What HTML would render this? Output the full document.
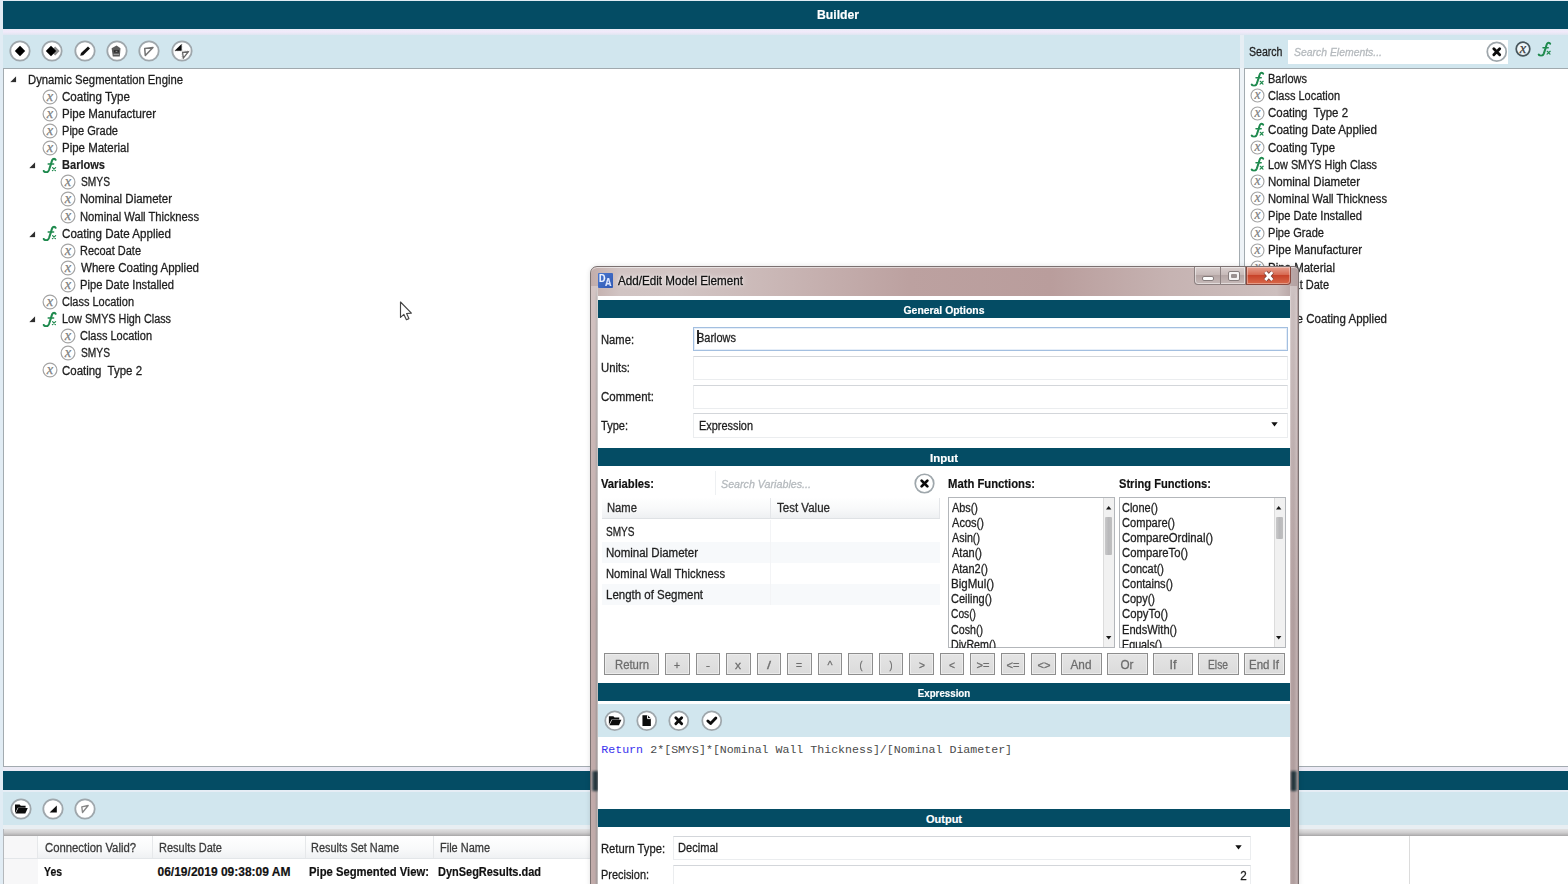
<!DOCTYPE html>
<html><head><meta charset="utf-8"><title>Builder</title>
<style>
html,body{margin:0;padding:0}
body{width:1568px;height:884px;overflow:hidden;background:#e1ecf4;position:relative;font-family:"Liberation Sans",sans-serif;font-size:12px}
#main,#dlg{position:absolute;left:0;top:0;width:1568px;height:884px;overflow:hidden}
#main div,#dlg div{position:absolute;box-sizing:border-box}
.t{position:absolute;white-space:nowrap;line-height:16px;display:block}
svg{position:absolute;overflow:visible}

</style></head>
<body>
<svg width="0" height="0" style="position:absolute">
<defs>
<symbol id="vx" viewBox="0 0 16 16"><circle cx="8" cy="8" r="6.9" fill="#fff" stroke="#a4a4a4" stroke-width="1.2"/><text x="7.9" y="11.7" text-anchor="middle" font-family="Liberation Serif" font-style="italic" font-size="14.5" fill="#808080" stroke="#808080" stroke-width="0.25">x</text></symbol>
<symbol id="vxd" viewBox="0 0 16 16"><circle cx="8" cy="8" r="6.8" fill="#eef5f8" stroke="#46555b" stroke-width="1.7"/><text x="7.9" y="11.7" text-anchor="middle" font-family="Liberation Serif" font-style="italic" font-size="14.5" fill="#3a3a3a" stroke="#3a3a3a" stroke-width="0.25">x</text></symbol>
<symbol id="fx" viewBox="0 0 16 16"><g fill="none" stroke="#1f8a4e" stroke-linecap="round" stroke-linejoin="round"><path d="M13.6 2.8 C13.1 1.4 11.1 1.2 10.3 3 C9.7 4.3 9.3 5.9 8.8 7.6 L7 13 C6.3 14.9 4.8 15.7 3 15 C2.4 14.8 2 14.4 1.8 14" stroke-width="2.05"/><path d="M6.2 6.9 H11.6" stroke-width="1.5"/><path d="M10.6 10.6 L13.4 13.6 M13.6 10.6 L10.4 13.6" stroke-width="1.25"/></g></symbol>
<symbol id="exp" viewBox="0 0 6 6"><path d="M5.6 0.2 V5.6 H0.2 Z" fill="#2e2e2e"/></symbol>
<symbol id="cb" viewBox="0 0 22 22"><circle cx="11" cy="11" r="9.7" fill="#fff" stroke="#9fa7ac" stroke-width="1.8"/></symbol>
<symbol id="i-dia" viewBox="0 0 22 22"><path d="M11 5.8 L16.2 11 L11 16.2 L5.8 11 Z" fill="#000"/></symbol>
<symbol id="i-dia2" viewBox="0 0 22 22"><path d="M14.2 6.6 L18.6 11 L14.2 15.4 L9.8 11 Z" fill="#8c8c8c"/><path d="M10 5.8 L15.2 11 L10 16.2 L4.8 11 Z" fill="#000"/></symbol>
<symbol id="i-pen" viewBox="0 0 22 22"><path d="M6.2 15.8 L7 13 L14 6.4 L16 8.4 L9.2 15.2 Z" fill="#111"/></symbol>
<symbol id="i-trash" viewBox="0 0 22 22"><path d="M10.6 5.4 L14.5 8.3 L13.8 16.5 H6.8 L5.6 8.3 Z" fill="#5c5c5c"/><path d="M7.8 10.2 H13 V12.6 H7.8 Z" fill="#2a2a2a"/><path d="M7.6 14.4 H13.2" stroke="#b0b0b0" stroke-width="0.9"/><path d="M9.6 11.4 H11.4" stroke="#aaa" stroke-width="0.8"/></symbol>
<symbol id="i-tri" viewBox="0 0 22 22"><path d="M6.7 8.4 L15 7.4 L7.3 15.5 Z" fill="none" stroke="#727272" stroke-width="1.5" stroke-linejoin="round"/></symbol>
<symbol id="i-quad" viewBox="0 0 22 22"><path d="M11 1.5 V20.5 M1.5 11 H20.5" stroke="#c2c2c2" stroke-width="0.8" stroke-dasharray="1.2 1.2"/><path d="M3.6 10.8 L10.6 4 V10.8 Z" fill="#0a0a0a"/><path d="M11.6 12.5 L17.5 11.7 L12.3 18.2 Z" fill="none" stroke="#666" stroke-width="1.3" stroke-linejoin="round"/></symbol>
<symbol id="i-x" viewBox="0 0 22 22"><path d="M8 8 L14 14 M14 8 L8 14" stroke="#0c0c0c" stroke-width="2.9" stroke-linecap="round"/></symbol>
<symbol id="i-check" viewBox="0 0 22 22"><path d="M7 11.2 L9.8 13.8 L15.2 8.2" fill="none" stroke="#0c0c0c" stroke-width="2.9" stroke-linecap="round" stroke-linejoin="round"/></symbol>
<symbol id="i-folder" viewBox="0 0 22 22"><path d="M5 6.4 H9.6 L10.8 7.8 H15.6 V9.7 H7.8 L5 15.2 Z" fill="#0c0c0c"/><path d="M8.3 10.1 H17.8 L15.3 15.6 H5.5 Z" fill="#0c0c0c"/></symbol>
<symbol id="i-doc" viewBox="0 0 22 22"><path d="M6.6 5.4 H12 L15.2 8.6 V16.4 H6.6 Z" fill="#0c0c0c"/><path d="M11.8 5.4 V8.8 H15.2" fill="none" stroke="#fff" stroke-width="1"/></symbol>
<symbol id="i-up" viewBox="0 0 22 22"><path d="M14.8 7.4 V14.6 H7.6 Z" fill="#0c0c0c"/></symbol>
<symbol id="i-flag" viewBox="0 0 22 22"><path d="M7.8 8.8 L14.2 7.5 L8.5 14.5 Z" fill="none" stroke="#858585" stroke-width="1.3" stroke-linejoin="round"/></symbol>
</defs>
</svg>

<div id="main">
<div style="left:3px;top:1px;width:1565px;height:28px;background:#044c64"></div>
<span class="t" style="left:538px;width:600px;text-align:center;top:6.70px;font-size:12px;font-weight:700;color:#fff;font-family:'Liberation Sans',sans-serif;transform:scaleX(1.0159);transform-origin:center center;transform-origin:center;-webkit-text-stroke:0.18px #fff;">Builder</span>
<div style="left:3px;top:29px;width:1565px;height:6px;background:linear-gradient(#e8edf6,#f2eafa 45%,#dfe6f1)"></div>
<div style="left:3px;top:35px;width:1237px;height:33px;background:#d1e6ee"></div>
<div style="left:1240px;top:35px;width:4px;height:33px;background:#e6eef4"></div>
<div style="left:1244px;top:35px;width:324px;height:33px;background:#d1e6ee"></div>
<div style="left:3px;top:67.6px;width:1237px;height:699.4px;background:#fff;border:1px solid #a3abb0;border-top:1.6px solid #a0a9ae"></div>
<div style="left:1244.2px;top:67.6px;width:330px;height:699.4px;background:#fff;border:1px solid #a3abb0;border-top:1.6px solid #a0a9ae"></div>
<div style="left:1240px;top:68px;width:4.2px;height:699px;background:#eef3f7"></div>
<svg style="left:8.70px;top:40.20px" width="22" height="22"><use href="#cb"/></svg>
<svg style="left:8.70px;top:40.20px" width="22" height="22"><use href="#i-dia"/></svg>
<svg style="left:41.00px;top:40.20px" width="22" height="22"><use href="#cb"/></svg>
<svg style="left:41.00px;top:40.20px" width="22" height="22"><use href="#i-dia2"/></svg>
<svg style="left:73.60px;top:40.20px" width="22" height="22"><use href="#cb"/></svg>
<svg style="left:73.60px;top:40.20px" width="22" height="22"><use href="#i-pen"/></svg>
<svg style="left:106.20px;top:40.20px" width="22" height="22"><use href="#cb"/></svg>
<svg style="left:106.20px;top:40.20px" width="22" height="22"><use href="#i-trash"/></svg>
<svg style="left:138.30px;top:40.20px" width="22" height="22"><use href="#cb"/></svg>
<svg style="left:138.30px;top:40.20px" width="22" height="22"><use href="#i-tri"/></svg>
<svg style="left:170.60px;top:40.20px" width="22" height="22"><use href="#cb"/></svg>
<svg style="left:170.60px;top:40.20px" width="22" height="22"><use href="#i-quad"/></svg>
<svg style="left:9.80px;top:76.40px" width="6.6" height="6.6"><use href="#exp"/></svg>
<span class="t" style="left:27.67px;top:71.70px;font-size:12px;font-weight:400;color:#1e1e1e;font-family:'Liberation Sans',sans-serif;transform:scaleX(0.9407);transform-origin:left center;-webkit-text-stroke:0.28px #1e1e1e;">Dynamic Segmentation Engine</span>
<svg style="left:41.80px;top:88.61px" width="16" height="16"><use href="#vx"/></svg>
<span class="t" style="left:62.01px;top:88.81px;font-size:12px;font-weight:400;color:#1e1e1e;font-family:'Liberation Sans',sans-serif;transform:scaleX(0.9645);transform-origin:left center;-webkit-text-stroke:0.28px #1e1e1e;">Coating Type</span>
<svg style="left:41.80px;top:105.72px" width="16" height="16"><use href="#vx"/></svg>
<span class="t" style="left:61.66px;top:105.92px;font-size:12px;font-weight:400;color:#1e1e1e;font-family:'Liberation Sans',sans-serif;transform:scaleX(0.9586);transform-origin:left center;-webkit-text-stroke:0.28px #1e1e1e;">Pipe Manufacturer</span>
<svg style="left:41.80px;top:122.83px" width="16" height="16"><use href="#vx"/></svg>
<span class="t" style="left:61.69px;top:123.03px;font-size:12px;font-weight:400;color:#1e1e1e;font-family:'Liberation Sans',sans-serif;transform:scaleX(0.9225);transform-origin:left center;-webkit-text-stroke:0.28px #1e1e1e;">Pipe Grade</span>
<svg style="left:41.80px;top:139.94px" width="16" height="16"><use href="#vx"/></svg>
<span class="t" style="left:61.66px;top:140.14px;font-size:12px;font-weight:400;color:#1e1e1e;font-family:'Liberation Sans',sans-serif;transform:scaleX(0.9567);transform-origin:left center;-webkit-text-stroke:0.28px #1e1e1e;">Pipe Material</span>
<svg style="left:28.60px;top:162.25px" width="6.6" height="6.6"><use href="#exp"/></svg>
<svg style="left:42.40px;top:156.65px" width="16" height="16"><use href="#fx"/></svg>
<span class="t" style="left:61.86px;top:157.25px;font-size:12px;font-weight:700;color:#1e1e1e;font-family:'Liberation Sans',sans-serif;transform:scaleX(0.9210);transform-origin:left center;-webkit-text-stroke:0.18px #1e1e1e;">Barlows</span>
<svg style="left:60.10px;top:174.16px" width="16" height="16"><use href="#vx"/></svg>
<span class="t" style="left:80.54px;top:174.36px;font-size:12px;font-weight:400;color:#1e1e1e;font-family:'Liberation Sans',sans-serif;transform:scaleX(0.8525);transform-origin:left center;-webkit-text-stroke:0.28px #1e1e1e;">SMYS</span>
<svg style="left:60.10px;top:191.27px" width="16" height="16"><use href="#vx"/></svg>
<span class="t" style="left:80.06px;top:191.47px;font-size:12px;font-weight:400;color:#1e1e1e;font-family:'Liberation Sans',sans-serif;transform:scaleX(0.9580);transform-origin:left center;-webkit-text-stroke:0.28px #1e1e1e;">Nominal Diameter</span>
<svg style="left:60.10px;top:208.38px" width="16" height="16"><use href="#vx"/></svg>
<span class="t" style="left:80.08px;top:208.58px;font-size:12px;font-weight:400;color:#1e1e1e;font-family:'Liberation Sans',sans-serif;transform:scaleX(0.9342);transform-origin:left center;-webkit-text-stroke:0.28px #1e1e1e;">Nominal Wall Thickness</span>
<svg style="left:28.60px;top:230.69px" width="6.6" height="6.6"><use href="#exp"/></svg>
<svg style="left:42.40px;top:225.09px" width="16" height="16"><use href="#fx"/></svg>
<span class="t" style="left:62.01px;top:225.69px;font-size:12px;font-weight:400;color:#1e1e1e;font-family:'Liberation Sans',sans-serif;transform:scaleX(0.9667);transform-origin:left center;-webkit-text-stroke:0.28px #1e1e1e;">Coating Date Applied</span>
<svg style="left:60.10px;top:242.60px" width="16" height="16"><use href="#vx"/></svg>
<span class="t" style="left:80.1px;top:242.80px;font-size:12px;font-weight:400;color:#1e1e1e;font-family:'Liberation Sans',sans-serif;transform:scaleX(0.9145);transform-origin:left center;-webkit-text-stroke:0.28px #1e1e1e;">Recoat Date</span>
<svg style="left:60.10px;top:259.71px" width="16" height="16"><use href="#vx"/></svg>
<span class="t" style="left:80.95px;top:259.91px;font-size:12px;font-weight:400;color:#1e1e1e;font-family:'Liberation Sans',sans-serif;transform:scaleX(0.9613);transform-origin:left center;-webkit-text-stroke:0.28px #1e1e1e;">Where Coating Applied</span>
<svg style="left:60.10px;top:276.82px" width="16" height="16"><use href="#vx"/></svg>
<span class="t" style="left:80.08px;top:277.02px;font-size:12px;font-weight:400;color:#1e1e1e;font-family:'Liberation Sans',sans-serif;transform:scaleX(0.9331);transform-origin:left center;-webkit-text-stroke:0.28px #1e1e1e;">Pipe Date Installed</span>
<svg style="left:41.80px;top:293.93px" width="16" height="16"><use href="#vx"/></svg>
<span class="t" style="left:62.04px;top:294.13px;font-size:12px;font-weight:400;color:#1e1e1e;font-family:'Liberation Sans',sans-serif;transform:scaleX(0.9146);transform-origin:left center;-webkit-text-stroke:0.28px #1e1e1e;">Class Location</span>
<svg style="left:28.60px;top:316.24px" width="6.6" height="6.6"><use href="#exp"/></svg>
<svg style="left:42.40px;top:310.64px" width="16" height="16"><use href="#fx"/></svg>
<span class="t" style="left:61.71px;top:311.24px;font-size:12px;font-weight:400;color:#1e1e1e;font-family:'Liberation Sans',sans-serif;transform:scaleX(0.9029);transform-origin:left center;-webkit-text-stroke:0.28px #1e1e1e;">Low SMYS High Class</span>
<svg style="left:60.10px;top:328.15px" width="16" height="16"><use href="#vx"/></svg>
<span class="t" style="left:80.44px;top:328.35px;font-size:12px;font-weight:400;color:#1e1e1e;font-family:'Liberation Sans',sans-serif;transform:scaleX(0.9146);transform-origin:left center;-webkit-text-stroke:0.28px #1e1e1e;">Class Location</span>
<svg style="left:60.10px;top:345.26px" width="16" height="16"><use href="#vx"/></svg>
<span class="t" style="left:80.54px;top:345.46px;font-size:12px;font-weight:400;color:#1e1e1e;font-family:'Liberation Sans',sans-serif;transform:scaleX(0.8525);transform-origin:left center;-webkit-text-stroke:0.28px #1e1e1e;">SMYS</span>
<svg style="left:41.80px;top:362.37px" width="16" height="16"><use href="#vx"/></svg>
<span class="t" style="left:62.02px;top:362.57px;font-size:12px;font-weight:400;color:#1e1e1e;font-family:'Liberation Sans',sans-serif;transform:scaleX(0.9542);transform-origin:left center;-webkit-text-stroke:0.28px #1e1e1e;">Coating&nbsp; Type 2</span>
<span class="t" style="left:1248.52px;top:43.80px;font-size:12px;font-weight:400;color:#1e1e1e;font-family:'Liberation Sans',sans-serif;transform:scaleX(0.8809);transform-origin:left center;-webkit-text-stroke:0.28px #1e1e1e;">Search</span>
<div style="left:1288px;top:39.6px;width:220px;height:24px;background:#fff"></div>
<span class="t" style="left:1293.71px;top:44.20px;font-size:11px;font-weight:400;color:#b4b9bd;font-family:'Liberation Sans',sans-serif;font-style:italic;transform:scaleX(0.9469);transform-origin:left center;-webkit-text-stroke:0.28px #b4b9bd;">Search Elements...</span>
<svg style="left:1485.95px;top:40.65px" width="21.5" height="21.5"><use href="#cb"/></svg>
<svg style="left:1485.95px;top:40.65px" width="21.5" height="21.5"><use href="#i-x"/></svg>
<svg style="left:1515.10px;top:41.40px" width="16" height="16"><use href="#vxd"/></svg>
<svg style="left:1537.05px;top:41.15px" width="15.5" height="15.5"><use href="#fx"/></svg>
<svg style="left:1250.05px;top:70.65px" width="15.5" height="15.5"><use href="#fx"/></svg>
<span class="t" style="left:1268.1px;top:71.00px;font-size:12px;font-weight:400;color:#1e1e1e;font-family:'Liberation Sans',sans-serif;transform:scaleX(0.9136);transform-origin:left center;-webkit-text-stroke:0.28px #1e1e1e;">Barlows</span>
<svg style="left:1249.50px;top:88.44px" width="15" height="15"><use href="#vx"/></svg>
<span class="t" style="left:1268.44px;top:88.14px;font-size:12px;font-weight:400;color:#1e1e1e;font-family:'Liberation Sans',sans-serif;transform:scaleX(0.9146);transform-origin:left center;-webkit-text-stroke:0.28px #1e1e1e;">Class Location</span>
<svg style="left:1249.50px;top:105.58px" width="15" height="15"><use href="#vx"/></svg>
<span class="t" style="left:1268.42px;top:105.28px;font-size:12px;font-weight:400;color:#1e1e1e;font-family:'Liberation Sans',sans-serif;transform:scaleX(0.9542);transform-origin:left center;-webkit-text-stroke:0.28px #1e1e1e;">Coating&nbsp; Type 2</span>
<svg style="left:1250.05px;top:122.07px" width="15.5" height="15.5"><use href="#fx"/></svg>
<span class="t" style="left:1268.41px;top:122.42px;font-size:12px;font-weight:400;color:#1e1e1e;font-family:'Liberation Sans',sans-serif;transform:scaleX(0.9667);transform-origin:left center;-webkit-text-stroke:0.28px #1e1e1e;">Coating Date Applied</span>
<svg style="left:1249.50px;top:139.86px" width="15" height="15"><use href="#vx"/></svg>
<span class="t" style="left:1268.42px;top:139.56px;font-size:12px;font-weight:400;color:#1e1e1e;font-family:'Liberation Sans',sans-serif;transform:scaleX(0.9504);transform-origin:left center;-webkit-text-stroke:0.28px #1e1e1e;">Coating Type</span>
<svg style="left:1250.05px;top:156.35px" width="15.5" height="15.5"><use href="#fx"/></svg>
<span class="t" style="left:1268.11px;top:156.70px;font-size:12px;font-weight:400;color:#1e1e1e;font-family:'Liberation Sans',sans-serif;transform:scaleX(0.9029);transform-origin:left center;-webkit-text-stroke:0.28px #1e1e1e;">Low SMYS High Class</span>
<svg style="left:1249.50px;top:174.14px" width="15" height="15"><use href="#vx"/></svg>
<span class="t" style="left:1268.06px;top:173.84px;font-size:12px;font-weight:400;color:#1e1e1e;font-family:'Liberation Sans',sans-serif;transform:scaleX(0.9580);transform-origin:left center;-webkit-text-stroke:0.28px #1e1e1e;">Nominal Diameter</span>
<svg style="left:1249.50px;top:191.28px" width="15" height="15"><use href="#vx"/></svg>
<span class="t" style="left:1268.08px;top:190.98px;font-size:12px;font-weight:400;color:#1e1e1e;font-family:'Liberation Sans',sans-serif;transform:scaleX(0.9342);transform-origin:left center;-webkit-text-stroke:0.28px #1e1e1e;">Nominal Wall Thickness</span>
<svg style="left:1249.50px;top:208.42px" width="15" height="15"><use href="#vx"/></svg>
<span class="t" style="left:1268.08px;top:208.12px;font-size:12px;font-weight:400;color:#1e1e1e;font-family:'Liberation Sans',sans-serif;transform:scaleX(0.9331);transform-origin:left center;-webkit-text-stroke:0.28px #1e1e1e;">Pipe Date Installed</span>
<svg style="left:1249.50px;top:225.56px" width="15" height="15"><use href="#vx"/></svg>
<span class="t" style="left:1268.09px;top:225.26px;font-size:12px;font-weight:400;color:#1e1e1e;font-family:'Liberation Sans',sans-serif;transform:scaleX(0.9225);transform-origin:left center;-webkit-text-stroke:0.28px #1e1e1e;">Pipe Grade</span>
<svg style="left:1249.50px;top:242.70px" width="15" height="15"><use href="#vx"/></svg>
<span class="t" style="left:1268.06px;top:242.40px;font-size:12px;font-weight:400;color:#1e1e1e;font-family:'Liberation Sans',sans-serif;transform:scaleX(0.9586);transform-origin:left center;-webkit-text-stroke:0.28px #1e1e1e;">Pipe Manufacturer</span>
<svg style="left:1249.50px;top:259.84px" width="15" height="15"><use href="#vx"/></svg>
<span class="t" style="left:1268.06px;top:259.54px;font-size:12px;font-weight:400;color:#1e1e1e;font-family:'Liberation Sans',sans-serif;transform:scaleX(0.9567);transform-origin:left center;-webkit-text-stroke:0.28px #1e1e1e;">Pipe Material</span>
<svg style="left:1249.50px;top:276.98px" width="15" height="15"><use href="#vx"/></svg>
<span class="t" style="left:1268.1px;top:276.68px;font-size:12px;font-weight:400;color:#1e1e1e;font-family:'Liberation Sans',sans-serif;transform:scaleX(0.9145);transform-origin:left center;-webkit-text-stroke:0.28px #1e1e1e;">Recoat Date</span>
<svg style="left:1249.50px;top:294.12px" width="15" height="15"><use href="#vx"/></svg>
<span class="t" style="left:1268.54px;top:293.82px;font-size:12px;font-weight:400;color:#1e1e1e;font-family:'Liberation Sans',sans-serif;transform:scaleX(0.8525);transform-origin:left center;-webkit-text-stroke:0.28px #1e1e1e;">SMYS</span>
<svg style="left:1249.50px;top:311.26px" width="15" height="15"><use href="#vx"/></svg>
<span class="t" style="left:1268.95px;top:310.96px;font-size:12px;font-weight:400;color:#1e1e1e;font-family:'Liberation Sans',sans-serif;transform:scaleX(0.9613);transform-origin:left center;-webkit-text-stroke:0.28px #1e1e1e;">Where Coating Applied</span>
<svg style="left:0;top:0" width="1568" height="884"><path d="M400.5 302 V317.4 L403.9 314.4 L406.4 319.7 L408.9 318.6 L406.6 313.5 L411.4 313.1 Z" fill="#fff" stroke="#444" stroke-width="1.15" stroke-linejoin="round"/></svg>
<div style="left:3px;top:767px;width:1565px;height:4.4px;background:#ecebf5"></div>
<div style="left:3px;top:771.3px;width:1565px;height:18.5px;background:#044c64"></div>
<div style="left:3px;top:789.8px;width:1565px;height:2.8px;background:#e6edf5"></div>
<div style="left:3px;top:792.4px;width:1565px;height:32.8px;background:#d1e6ee"></div>
<div style="left:3px;top:825px;width:1565px;height:4px;background:#e8eef2"></div>
<div style="left:3px;top:829px;width:1565px;height:7.4px;background:linear-gradient(#e2e2e3,#cfcecf 50%,#b4b3b4 88%,#a3a2a3)"></div>
<div style="left:3px;top:836.4px;width:1565px;height:48px;background:#fff"></div>
<div style="left:3px;top:836.4px;width:35px;height:48px;background:#f7f7f8"></div>
<svg style="left:9.80px;top:798.10px" width="22" height="22"><use href="#cb"/></svg>
<svg style="left:9.80px;top:798.10px" width="22" height="22"><use href="#i-folder"/></svg>
<svg style="left:42.00px;top:798.10px" width="22" height="22"><use href="#cb"/></svg>
<svg style="left:42.00px;top:798.10px" width="22" height="22"><use href="#i-up"/></svg>
<svg style="left:74.30px;top:798.10px" width="22" height="22"><use href="#cb"/></svg>
<svg style="left:74.30px;top:798.10px" width="22" height="22"><use href="#i-flag"/></svg>
<div style="left:38px;top:836.4px;width:1259px;height:22px;background:linear-gradient(#fff,#f8f9fa 60%,#eff1f3)"></div>
<div style="left:3px;top:858px;width:1294px;height:1px;background:#e3e6e9"></div>
<div style="left:3px;top:829px;width:1px;height:56px;background:#b4b8bc"></div>
<div style="left:37px;top:836px;width:1px;height:22px;background:#e6e8ea"></div>
<div style="left:152px;top:836px;width:1px;height:22px;background:#e6e8ea"></div>
<div style="left:305px;top:836px;width:1px;height:22px;background:#e6e8ea"></div>
<div style="left:433px;top:836px;width:1px;height:22px;background:#e6e8ea"></div>
<div style="left:1409px;top:836px;width:1px;height:48px;background:#dcdcdc"></div>
<span class="t" style="left:44.93px;top:839.90px;font-size:12px;font-weight:400;color:#3a3a3a;font-family:'Liberation Sans',sans-serif;transform:scaleX(0.9429);transform-origin:left center;-webkit-text-stroke:0.28px #3a3a3a;">Connection Valid?</span>
<span class="t" style="left:158.6px;top:839.90px;font-size:12px;font-weight:400;color:#3a3a3a;font-family:'Liberation Sans',sans-serif;transform:scaleX(0.9170);transform-origin:left center;-webkit-text-stroke:0.28px #3a3a3a;">Results Date</span>
<span class="t" style="left:311.1px;top:839.90px;font-size:12px;font-weight:400;color:#3a3a3a;font-family:'Liberation Sans',sans-serif;transform:scaleX(0.9100);transform-origin:left center;-webkit-text-stroke:0.28px #3a3a3a;">Results Set Name</span>
<span class="t" style="left:440.1px;top:839.90px;font-size:12px;font-weight:400;color:#3a3a3a;font-family:'Liberation Sans',sans-serif;transform:scaleX(0.9143);transform-origin:left center;-webkit-text-stroke:0.28px #3a3a3a;">File Name</span>
<span class="t" style="left:43.82px;top:863.80px;font-size:12px;font-weight:700;color:#111;font-family:'Liberation Sans',sans-serif;transform:scaleX(0.8694);transform-origin:left center;-webkit-text-stroke:0.18px #111;">Yes</span>
<span class="t" style="left:157.53px;top:863.80px;font-size:12px;font-weight:700;color:#111;font-family:'Liberation Sans',sans-serif;-webkit-text-stroke:0.18px #111;">06/19/2019 09:38:09 AM</span>
<span class="t" style="left:309.25px;top:863.80px;font-size:12px;font-weight:700;color:#111;font-family:'Liberation Sans',sans-serif;transform:scaleX(0.9388);transform-origin:left center;-webkit-text-stroke:0.18px #111;">Pipe Segmented View:</span>
<span class="t" style="left:438.27px;top:863.80px;font-size:12px;font-weight:700;color:#111;font-family:'Liberation Sans',sans-serif;transform:scaleX(0.9139);transform-origin:left center;-webkit-text-stroke:0.18px #111;">DynSegResults.dad</span>
</div>
<div id="dlg">
<div style="left:589.8px;top:266.3px;width:708.8px;height:640px;border-radius:7px 5px 0 0;border:1.3px solid #7b7171;background:linear-gradient(90deg,#c2adab 0%,#c6b3b1 1%,#d1c4c3 4%,#d2c5c4 12%,#cbb9b8 24%,#bca1a0 45%,#b99d9c 65%,#c6b3b2 82%,#cdbfbe 97%,#b8a6a6 99.2%,#b3a1a1 100%);box-shadow:inset 0 1px 0 rgba(255,255,255,.55),0 0 5px rgba(0,0,0,.12)"></div>
<div style="left:591.1px;top:284px;width:7px;height:610px;background:linear-gradient(90deg,#c3adab 0%,#bfa9a8 55%,#a59c9c 80%,#cfcaca 100%);-webkit-mask-image:linear-gradient(transparent,#000 14px);mask-image:linear-gradient(transparent,#000 14px)"></div>
<div style="left:1290.3px;top:284px;width:7.1px;height:610px;background:linear-gradient(90deg,#ddd4d4 0%,#b5a2a2 14%,#b09e9e 55%,#c1b1b1 100%);-webkit-mask-image:linear-gradient(transparent,#000 14px);mask-image:linear-gradient(transparent,#000 14px)"></div>
<div style="left:591.1px;top:286px;width:7px;height:330px;background:linear-gradient(rgba(255,255,255,.30),rgba(255,255,255,.22) 25%,rgba(255,255,255,0))"></div>
<div style="left:1290.3px;top:286px;width:7.1px;height:330px;background:linear-gradient(rgba(255,255,255,.34),rgba(255,255,255,.26) 25%,rgba(255,255,255,0))"></div>
<div style="left:592px;top:770.5px;width:5.6px;height:20px;background:linear-gradient(90deg,#5b6a70,#1b2c33 55%,#2a3c43);filter:blur(1.1px)"></div>
<div style="left:1291.2px;top:770.5px;width:5.6px;height:20px;background:linear-gradient(90deg,#2a3c43,#1b2c33 45%,#5b6a70);filter:blur(1.1px)"></div>
<div style="left:597.9px;top:295.6px;width:692.5px;height:600px;background:#fff"></div>
<div style="left:598px;top:273px;width:15px;height:15px;background:linear-gradient(135deg,#4a78cf,#2f58b4);border-radius:1px"></div>
<span class="t" style="left:599.0px;top:270.80px;font-size:10px;font-weight:700;color:#eef3ff;font-family:'Liberation Sans',sans-serif;transform:scaleX(0.8985);transform-origin:left center;-webkit-text-stroke:0.18px #eef3ff;">D</span>
<span class="t" style="left:605.38px;top:274.80px;font-size:10px;font-weight:700;color:#dfe8ff;font-family:'Liberation Sans',sans-serif;transform:scaleX(0.8985);transform-origin:left center;-webkit-text-stroke:0.18px #dfe8ff;">A</span>
<span class="t" style="left:617.98px;top:273.20px;font-size:12px;font-weight:400;color:#111;font-family:'Liberation Sans',sans-serif;transform:scaleX(0.9709);transform-origin:left center;-webkit-text-stroke:0.28px #111;text-shadow:0 0 6px #fff,0 0 3px rgba(255,255,255,.9);">Add/Edit Model Element</span>
<div style="left:1193.5px;top:267px;width:52.5px;height:18px;border:1px solid #8c8080;border-top:none;border-radius:0 0 0 4px;background:linear-gradient(#d9cfce,#c7bab9 45%,#b5a6a5 50%,#c6b9b8);box-shadow:inset 0 0 0 1px rgba(255,255,255,.5)"></div>
<div style="left:1219.8px;top:267px;width:1px;height:18px;background:#8c8080"></div>
<div style="left:1245.5px;top:267px;width:45.5px;height:18px;border:1px solid #8a4a40;border-top:none;border-radius:0 0 4px 0;background:linear-gradient(#e6a08f,#d76a52 45%,#c8432a 50%,#d9694a);box-shadow:inset 0 0 0 1px rgba(255,255,255,.35)"></div>
<div style="left:1201.6px;top:276px;width:12px;height:4.6px;background:#fdfdfd;border:1px solid #857c7c;border-radius:2px"></div>
<div style="left:1227.6px;top:271px;width:12.4px;height:9.8px;background:#f6f3f3;border:1.2px solid #857c7c;border-radius:2px"></div>
<div style="left:1230.8px;top:274px;width:6px;height:4px;background:#9a9090;border-radius:1px"></div>
<svg style="left:1263.2px;top:269.8px" width="11.6" height="11.6" viewBox="0 0 10 10"><path d="M2 1.8 L8 8.6 M8 1.8 L2 8.6" stroke="#7a4038" stroke-width="3.8" stroke-linecap="butt"/><path d="M2 1.8 L8 8.6 M8 1.8 L2 8.6" stroke="#fff" stroke-width="2.5" stroke-linecap="butt"/></svg>
<div style="left:597.9px;top:300.1px;width:692.5px;height:18.2px;background:#044c64"></div>
<span class="t" style="left:644px;width:600px;text-align:center;top:301.80px;font-size:11px;font-weight:700;color:#fff;font-family:'Liberation Sans',sans-serif;transform:scaleX(0.9465);transform-origin:center center;transform-origin:center;-webkit-text-stroke:0.18px #fff;">General Options</span>
<div style="left:597.9px;top:448.1px;width:692.5px;height:18.2px;background:#044c64"></div>
<span class="t" style="left:644px;width:600px;text-align:center;top:449.80px;font-size:11px;font-weight:700;color:#fff;font-family:'Liberation Sans',sans-serif;transform:scaleX(1.0413);transform-origin:center center;transform-origin:center;-webkit-text-stroke:0.18px #fff;">Input</span>
<div style="left:597.9px;top:683.1px;width:692.5px;height:18.2px;background:#044c64"></div>
<span class="t" style="left:644px;width:600px;text-align:center;top:684.80px;font-size:11px;font-weight:700;color:#fff;font-family:'Liberation Sans',sans-serif;transform:scaleX(0.8851);transform-origin:center center;transform-origin:center;-webkit-text-stroke:0.18px #fff;">Expression</span>
<div style="left:597.9px;top:809.1px;width:692.5px;height:18.2px;background:#044c64"></div>
<span class="t" style="left:644px;width:600px;text-align:center;top:810.80px;font-size:11px;font-weight:700;color:#fff;font-family:'Liberation Sans',sans-serif;transform-origin:center;-webkit-text-stroke:0.18px #fff;">Output</span>
<span class="t" style="left:600.58px;top:331.80px;font-size:12px;font-weight:400;color:#1e1e1e;font-family:'Liberation Sans',sans-serif;transform:scaleX(0.9337);transform-origin:left center;-webkit-text-stroke:0.28px #1e1e1e;">Name:</span>
<span class="t" style="left:600.63px;top:360.40px;font-size:12px;font-weight:400;color:#1e1e1e;font-family:'Liberation Sans',sans-serif;transform:scaleX(0.9450);transform-origin:left center;-webkit-text-stroke:0.28px #1e1e1e;">Units:</span>
<span class="t" style="left:600.92px;top:389.20px;font-size:12px;font-weight:400;color:#1e1e1e;font-family:'Liberation Sans',sans-serif;transform:scaleX(0.9574);transform-origin:left center;-webkit-text-stroke:0.28px #1e1e1e;">Comment:</span>
<span class="t" style="left:601.25px;top:417.80px;font-size:12px;font-weight:400;color:#1e1e1e;font-family:'Liberation Sans',sans-serif;transform:scaleX(0.9196);transform-origin:left center;-webkit-text-stroke:0.28px #1e1e1e;">Type:</span>
<div style="left:693px;top:326.5px;width:594.5px;height:24.5px;background:#fff;border:1px solid #a3bfe0;box-shadow:inset 0 0 0 1px #e6eef8"></div>
<div style="left:693px;top:355.5px;width:594.5px;height:24px;background:#fff;border:1px solid #ebedef;border-top-color:#d3d6da"></div>
<div style="left:693px;top:384.5px;width:594.5px;height:24px;background:#fff;border:1px solid #ebedef;border-top-color:#d3d6da"></div>
<div style="left:693px;top:413px;width:594.5px;height:24.6px;background:#fff;border:1px solid #ebedef;border-top-color:#d3d6da"></div>
<div style="left:697.4px;top:330.2px;width:1.2px;height:14.2px;background:#333"></div>
<span class="t" style="left:697.1px;top:330.40px;font-size:12px;font-weight:400;color:#1e1e1e;font-family:'Liberation Sans',sans-serif;transform:scaleX(0.9136);transform-origin:left center;-webkit-text-stroke:0.28px #1e1e1e;">Barlows</span>
<span class="t" style="left:698.6px;top:417.80px;font-size:12px;font-weight:400;color:#1e1e1e;font-family:'Liberation Sans',sans-serif;transform:scaleX(0.9095);transform-origin:left center;-webkit-text-stroke:0.28px #1e1e1e;">Expression</span>
<svg style="left:1270.6px;top:422.4px" width="7" height="5" viewBox="0 0 7 5"><path d="M0.3 0.3 H6.7 L3.5 4.6 Z" fill="#111"/></svg>
<span class="t" style="left:600.92px;top:475.60px;font-size:12px;font-weight:700;color:#111;font-family:'Liberation Sans',sans-serif;transform:scaleX(0.9347);transform-origin:left center;-webkit-text-stroke:0.18px #111;">Variables:</span>
<div style="left:715px;top:471px;width:1px;height:24px;background:#eef0f2"></div>
<span class="t" style="left:720.7px;top:475.80px;font-size:11px;font-weight:400;color:#b4b9bd;font-family:'Liberation Sans',sans-serif;font-style:italic;transform:scaleX(0.9726);transform-origin:left center;-webkit-text-stroke:0.28px #b4b9bd;">Search Variables...</span>
<svg style="left:913.50px;top:472.70px" width="21" height="21"><use href="#cb"/></svg>
<svg style="left:913.50px;top:472.70px" width="21" height="21"><use href="#i-x"/></svg>
<span class="t" style="left:947.75px;top:475.60px;font-size:12px;font-weight:700;color:#111;font-family:'Liberation Sans',sans-serif;transform:scaleX(0.9390);transform-origin:left center;-webkit-text-stroke:0.18px #111;">Math Functions:</span>
<span class="t" style="left:1118.68px;top:475.60px;font-size:12px;font-weight:700;color:#111;font-family:'Liberation Sans',sans-serif;transform:scaleX(0.9262);transform-origin:left center;-webkit-text-stroke:0.18px #111;">String Functions:</span>
<div style="left:602px;top:497px;width:338px;height:22px;background:linear-gradient(#fff,#f8f9fa 55%,#eef0f2);border-bottom:1px solid #dfe2e5"></div>
<div style="left:770px;top:498px;width:1px;height:20px;background:#e4e6e9"></div>
<div style="left:938.5px;top:498px;width:1px;height:20px;background:#e4e6e9"></div>
<span class="t" style="left:607.08px;top:499.80px;font-size:12px;font-weight:400;color:#2a2a2a;font-family:'Liberation Sans',sans-serif;transform:scaleX(0.9370);transform-origin:left center;-webkit-text-stroke:0.28px #2a2a2a;">Name</span>
<span class="t" style="left:777.24px;top:499.80px;font-size:12px;font-weight:400;color:#2a2a2a;font-family:'Liberation Sans',sans-serif;transform:scaleX(0.9609);transform-origin:left center;-webkit-text-stroke:0.28px #2a2a2a;">Test Value</span>
<div style="left:602px;top:541.5px;width:338px;height:21px;background:#f7f9fb"></div>
<div style="left:602px;top:583.5px;width:338px;height:21px;background:#f7f9fb"></div>
<div style="left:770px;top:520px;width:1px;height:85px;background:#f3f4f6"></div>
<span class="t" style="left:606.04px;top:523.60px;font-size:12px;font-weight:400;color:#1e1e1e;font-family:'Liberation Sans',sans-serif;transform:scaleX(0.8379);transform-origin:left center;-webkit-text-stroke:0.28px #1e1e1e;">SMYS</span>
<span class="t" style="left:605.56px;top:544.60px;font-size:12px;font-weight:400;color:#1e1e1e;font-family:'Liberation Sans',sans-serif;transform:scaleX(0.9580);transform-origin:left center;-webkit-text-stroke:0.28px #1e1e1e;">Nominal Diameter</span>
<span class="t" style="left:605.58px;top:565.60px;font-size:12px;font-weight:400;color:#1e1e1e;font-family:'Liberation Sans',sans-serif;transform:scaleX(0.9342);transform-origin:left center;-webkit-text-stroke:0.28px #1e1e1e;">Nominal Wall Thickness</span>
<span class="t" style="left:605.56px;top:586.60px;font-size:12px;font-weight:400;color:#1e1e1e;font-family:'Liberation Sans',sans-serif;transform:scaleX(0.9564);transform-origin:left center;-webkit-text-stroke:0.28px #1e1e1e;">Length of Segment</span>
<div style="left:948px;top:496.9px;width:167.4px;height:151.6px;background:#fff;border:1px solid #b3b6ba;overflow:hidden"></div>
<div style="left:1102.9px;top:498px;width:11.5px;height:149.4px;background:#f1f1f1;border-left:1px solid #dcdcdc"></div>
<div style="left:1105.3000000000002px;top:517.4px;width:6.8px;height:38px;background:linear-gradient(90deg,#c9c9ca,#b9b9bb 50%,#bfbfc0);border-radius:1px"></div>
<svg style="left:1105.5px;top:506.4px" width="5.4" height="3.6" viewBox="0 0 6 4"><path d="M0 4 L3 0 L6 4 Z" fill="#1a1a1a"/></svg>
<svg style="left:1105.5px;top:636px" width="5.4" height="3.6" viewBox="0 0 6 4"><path d="M0 0 L3 4 L6 0 Z" fill="#1a1a1a"/></svg>
<span class="t" style="left:951.98px;top:499.60px;font-size:12px;font-weight:400;color:#1e1e1e;font-family:'Liberation Sans',sans-serif;transform:scaleX(0.9068);transform-origin:left center;-webkit-text-stroke:0.28px #1e1e1e;clip-path:inset(0 0 0.0px 0);">Abs()</span>
<span class="t" style="left:951.98px;top:514.85px;font-size:12px;font-weight:400;color:#1e1e1e;font-family:'Liberation Sans',sans-serif;transform:scaleX(0.9229);transform-origin:left center;-webkit-text-stroke:0.28px #1e1e1e;clip-path:inset(0 0 0.0px 0);">Acos()</span>
<span class="t" style="left:951.98px;top:530.10px;font-size:12px;font-weight:400;color:#1e1e1e;font-family:'Liberation Sans',sans-serif;transform:scaleX(0.8933);transform-origin:left center;-webkit-text-stroke:0.28px #1e1e1e;clip-path:inset(0 0 0.0px 0);">Asin()</span>
<span class="t" style="left:951.98px;top:545.35px;font-size:12px;font-weight:400;color:#1e1e1e;font-family:'Liberation Sans',sans-serif;transform:scaleX(0.9178);transform-origin:left center;-webkit-text-stroke:0.28px #1e1e1e;clip-path:inset(0 0 0.0px 0);">Atan()</span>
<span class="t" style="left:951.98px;top:560.60px;font-size:12px;font-weight:400;color:#1e1e1e;font-family:'Liberation Sans',sans-serif;transform:scaleX(0.9146);transform-origin:left center;-webkit-text-stroke:0.28px #1e1e1e;clip-path:inset(0 0 0.0px 0);">Atan2()</span>
<span class="t" style="left:951.05px;top:575.85px;font-size:12px;font-weight:400;color:#1e1e1e;font-family:'Liberation Sans',sans-serif;transform:scaleX(0.9626);transform-origin:left center;-webkit-text-stroke:0.28px #1e1e1e;clip-path:inset(0 0 0.0px 0);">BigMul()</span>
<span class="t" style="left:951.44px;top:591.10px;font-size:12px;font-weight:400;color:#1e1e1e;font-family:'Liberation Sans',sans-serif;transform:scaleX(0.9175);transform-origin:left center;-webkit-text-stroke:0.28px #1e1e1e;clip-path:inset(0 0 0.0px 0);">Ceiling()</span>
<span class="t" style="left:951.48px;top:606.35px;font-size:12px;font-weight:400;color:#1e1e1e;font-family:'Liberation Sans',sans-serif;transform:scaleX(0.8520);transform-origin:left center;-webkit-text-stroke:0.28px #1e1e1e;clip-path:inset(0 0 0.0px 0);">Cos()</span>
<span class="t" style="left:951.46px;top:621.60px;font-size:12px;font-weight:400;color:#1e1e1e;font-family:'Liberation Sans',sans-serif;transform:scaleX(0.8885);transform-origin:left center;-webkit-text-stroke:0.28px #1e1e1e;clip-path:inset(0 0 0.0px 0);">Cosh()</span>
<span class="t" style="left:951.13px;top:636.85px;font-size:12px;font-weight:400;color:#1e1e1e;font-family:'Liberation Sans',sans-serif;transform:scaleX(0.8881);transform-origin:left center;-webkit-text-stroke:0.28px #1e1e1e;clip-path:inset(0 0 4.8px 0);">DivRem()</span>
<div style="left:1119px;top:496.9px;width:167px;height:151.6px;background:#fff;border:1px solid #b3b6ba;overflow:hidden"></div>
<div style="left:1273.5px;top:498px;width:11.5px;height:149.4px;background:#f1f1f1;border-left:1px solid #dcdcdc"></div>
<div style="left:1275.9px;top:517.4px;width:6.8px;height:22px;background:linear-gradient(90deg,#c9c9ca,#b9b9bb 50%,#bfbfc0);border-radius:1px"></div>
<svg style="left:1276.1px;top:506.4px" width="5.4" height="3.6" viewBox="0 0 6 4"><path d="M0 4 L3 0 L6 4 Z" fill="#1a1a1a"/></svg>
<svg style="left:1276.1px;top:636px" width="5.4" height="3.6" viewBox="0 0 6 4"><path d="M0 0 L3 4 L6 0 Z" fill="#1a1a1a"/></svg>
<span class="t" style="left:1122.44px;top:499.60px;font-size:12px;font-weight:400;color:#1e1e1e;font-family:'Liberation Sans',sans-serif;transform:scaleX(0.9146);transform-origin:left center;-webkit-text-stroke:0.28px #1e1e1e;clip-path:inset(0 0 0.0px 0);">Clone()</span>
<span class="t" style="left:1122.44px;top:514.85px;font-size:12px;font-weight:400;color:#1e1e1e;font-family:'Liberation Sans',sans-serif;transform:scaleX(0.9240);transform-origin:left center;-webkit-text-stroke:0.28px #1e1e1e;clip-path:inset(0 0 0.0px 0);">Compare()</span>
<span class="t" style="left:1122.42px;top:530.10px;font-size:12px;font-weight:400;color:#1e1e1e;font-family:'Liberation Sans',sans-serif;transform:scaleX(0.9476);transform-origin:left center;-webkit-text-stroke:0.28px #1e1e1e;clip-path:inset(0 0 0.0px 0);">CompareOrdinal()</span>
<span class="t" style="left:1122.43px;top:545.35px;font-size:12px;font-weight:400;color:#1e1e1e;font-family:'Liberation Sans',sans-serif;transform:scaleX(0.9424);transform-origin:left center;-webkit-text-stroke:0.28px #1e1e1e;clip-path:inset(0 0 0.0px 0);">CompareTo()</span>
<span class="t" style="left:1122.44px;top:560.60px;font-size:12px;font-weight:400;color:#1e1e1e;font-family:'Liberation Sans',sans-serif;transform:scaleX(0.9127);transform-origin:left center;-webkit-text-stroke:0.28px #1e1e1e;clip-path:inset(0 0 0.0px 0);">Concat()</span>
<span class="t" style="left:1122.44px;top:575.85px;font-size:12px;font-weight:400;color:#1e1e1e;font-family:'Liberation Sans',sans-serif;transform:scaleX(0.9213);transform-origin:left center;-webkit-text-stroke:0.28px #1e1e1e;clip-path:inset(0 0 0.0px 0);">Contains()</span>
<span class="t" style="left:1122.44px;top:591.10px;font-size:12px;font-weight:400;color:#1e1e1e;font-family:'Liberation Sans',sans-serif;transform:scaleX(0.9163);transform-origin:left center;-webkit-text-stroke:0.28px #1e1e1e;clip-path:inset(0 0 0.0px 0);">Copy()</span>
<span class="t" style="left:1122.42px;top:606.35px;font-size:12px;font-weight:400;color:#1e1e1e;font-family:'Liberation Sans',sans-serif;transform:scaleX(0.9448);transform-origin:left center;-webkit-text-stroke:0.28px #1e1e1e;clip-path:inset(0 0 0.0px 0);">CopyTo()</span>
<span class="t" style="left:1122.09px;top:621.60px;font-size:12px;font-weight:400;color:#1e1e1e;font-family:'Liberation Sans',sans-serif;transform:scaleX(0.9268);transform-origin:left center;-webkit-text-stroke:0.28px #1e1e1e;clip-path:inset(0 0 0.0px 0);">EndsWith()</span>
<span class="t" style="left:1122.12px;top:636.85px;font-size:12px;font-weight:400;color:#1e1e1e;font-family:'Liberation Sans',sans-serif;transform:scaleX(0.8951);transform-origin:left center;-webkit-text-stroke:0.28px #1e1e1e;clip-path:inset(0 0 4.8px 0);">Equals()</span>
<div style="left:604px;top:652.8px;width:55.4px;height:22.6px;background:linear-gradient(#e4e4e4,#dbdbdb);border:1px solid #8d8d8d;box-shadow:inset 0 0 0 1px #ececec"></div>
<span class="t" style="left:331.70000000000005px;width:600px;text-align:center;top:656.60px;font-size:12px;font-weight:400;color:#6d6d6d;font-family:'Liberation Sans',sans-serif;transform:scaleX(0.9436);transform-origin:center center;transform-origin:center;-webkit-text-stroke:0.28px #6d6d6d;">Return</span>
<div style="left:665.2px;top:652.8px;width:24.4px;height:22.6px;background:linear-gradient(#e4e4e4,#dbdbdb);border:1px solid #8d8d8d;box-shadow:inset 0 0 0 1px #ececec"></div>
<span class="t" style="left:377.4000000000001px;width:600px;text-align:center;top:656.60px;font-size:11px;font-weight:400;color:#6d6d6d;font-family:'Liberation Sans',sans-serif;transform:scaleX(0.9320);transform-origin:center center;transform-origin:center;-webkit-text-stroke:0.28px #6d6d6d;">+</span>
<div style="left:695.72px;top:652.8px;width:24.4px;height:22.6px;background:linear-gradient(#e4e4e4,#dbdbdb);border:1px solid #8d8d8d;box-shadow:inset 0 0 0 1px #ececec"></div>
<span class="t" style="left:407.9200000000001px;width:600px;text-align:center;top:656.60px;font-size:11px;font-weight:400;color:#6d6d6d;font-family:'Liberation Sans',sans-serif;transform:scaleX(1.0894);transform-origin:center center;transform-origin:center;-webkit-text-stroke:0.28px #6d6d6d;">-</span>
<div style="left:726.24px;top:652.8px;width:24.4px;height:22.6px;background:linear-gradient(#e4e4e4,#dbdbdb);border:1px solid #8d8d8d;box-shadow:inset 0 0 0 1px #ececec"></div>
<span class="t" style="left:438.44000000000005px;width:600px;text-align:center;top:656.60px;font-size:11px;font-weight:400;color:#6d6d6d;font-family:'Liberation Sans',sans-serif;transform:scaleX(1.0909);transform-origin:center center;transform-origin:center;-webkit-text-stroke:0.28px #6d6d6d;">x</span>
<div style="left:756.76px;top:652.8px;width:24.4px;height:22.6px;background:linear-gradient(#e4e4e4,#dbdbdb);border:1px solid #8d8d8d;box-shadow:inset 0 0 0 1px #ececec"></div>
<span class="t" style="left:468.96000000000004px;width:600px;text-align:center;top:656.60px;font-size:11px;font-weight:400;color:#6d6d6d;font-family:'Liberation Sans',sans-serif;transform:scaleX(1.3061);transform-origin:center center;transform-origin:center;-webkit-text-stroke:0.28px #6d6d6d;">/</span>
<div style="left:787.2800000000001px;top:652.8px;width:24.4px;height:22.6px;background:linear-gradient(#e4e4e4,#dbdbdb);border:1px solid #8d8d8d;box-shadow:inset 0 0 0 1px #ececec"></div>
<span class="t" style="left:499.48000000000013px;width:600px;text-align:center;top:656.60px;font-size:11px;font-weight:400;color:#6d6d6d;font-family:'Liberation Sans',sans-serif;transform:scaleX(0.9320);transform-origin:center center;transform-origin:center;-webkit-text-stroke:0.28px #6d6d6d;">=</span>
<div style="left:817.8000000000001px;top:652.8px;width:24.4px;height:22.6px;background:linear-gradient(#e4e4e4,#dbdbdb);border:1px solid #8d8d8d;box-shadow:inset 0 0 0 1px #ececec"></div>
<span class="t" style="left:530.0000000000001px;width:600px;text-align:center;top:656.60px;font-size:11px;font-weight:400;color:#6d6d6d;font-family:'Liberation Sans',sans-serif;transform:scaleX(0.9668);transform-origin:center center;transform-origin:center;-webkit-text-stroke:0.28px #6d6d6d;">^</span>
<div style="left:848.32px;top:652.8px;width:24.4px;height:22.6px;background:linear-gradient(#e4e4e4,#dbdbdb);border:1px solid #8d8d8d;box-shadow:inset 0 0 0 1px #ececec"></div>
<span class="t" style="left:560.5200000000001px;width:600px;text-align:center;top:656.60px;font-size:11px;font-weight:400;color:#6d6d6d;font-family:'Liberation Sans',sans-serif;transform:scaleX(0.8170);transform-origin:center center;transform-origin:center;-webkit-text-stroke:0.28px #6d6d6d;">(</span>
<div style="left:878.84px;top:652.8px;width:24.4px;height:22.6px;background:linear-gradient(#e4e4e4,#dbdbdb);border:1px solid #8d8d8d;box-shadow:inset 0 0 0 1px #ececec"></div>
<span class="t" style="left:591.0400000000001px;width:600px;text-align:center;top:656.60px;font-size:11px;font-weight:400;color:#6d6d6d;font-family:'Liberation Sans',sans-serif;transform:scaleX(0.8170);transform-origin:center center;transform-origin:center;-webkit-text-stroke:0.28px #6d6d6d;">)</span>
<div style="left:909.36px;top:652.8px;width:24.4px;height:22.6px;background:linear-gradient(#e4e4e4,#dbdbdb);border:1px solid #8d8d8d;box-shadow:inset 0 0 0 1px #ececec"></div>
<span class="t" style="left:621.5600000000001px;width:600px;text-align:center;top:656.60px;font-size:11px;font-weight:400;color:#6d6d6d;font-family:'Liberation Sans',sans-serif;transform:scaleX(0.9320);transform-origin:center center;transform-origin:center;-webkit-text-stroke:0.28px #6d6d6d;">&gt;</span>
<div style="left:939.8800000000001px;top:652.8px;width:24.4px;height:22.6px;background:linear-gradient(#e4e4e4,#dbdbdb);border:1px solid #8d8d8d;box-shadow:inset 0 0 0 1px #ececec"></div>
<span class="t" style="left:652.0800000000002px;width:600px;text-align:center;top:656.60px;font-size:11px;font-weight:400;color:#6d6d6d;font-family:'Liberation Sans',sans-serif;transform:scaleX(0.9320);transform-origin:center center;transform-origin:center;-webkit-text-stroke:0.28px #6d6d6d;">&lt;</span>
<div style="left:970.4000000000001px;top:652.8px;width:24.4px;height:22.6px;background:linear-gradient(#e4e4e4,#dbdbdb);border:1px solid #8d8d8d;box-shadow:inset 0 0 0 1px #ececec"></div>
<span class="t" style="left:682.6000000000001px;width:600px;text-align:center;top:656.60px;font-size:11px;font-weight:400;color:#6d6d6d;font-family:'Liberation Sans',sans-serif;transform:scaleX(1.0109);transform-origin:center center;transform-origin:center;-webkit-text-stroke:0.28px #6d6d6d;">&gt;=</span>
<div style="left:1000.9200000000001px;top:652.8px;width:24.4px;height:22.6px;background:linear-gradient(#e4e4e4,#dbdbdb);border:1px solid #8d8d8d;box-shadow:inset 0 0 0 1px #ececec"></div>
<span class="t" style="left:713.1200000000001px;width:600px;text-align:center;top:656.60px;font-size:11px;font-weight:400;color:#6d6d6d;font-family:'Liberation Sans',sans-serif;transform:scaleX(1.0109);transform-origin:center center;transform-origin:center;-webkit-text-stroke:0.28px #6d6d6d;">&lt;=</span>
<div style="left:1031.44px;top:652.8px;width:24.4px;height:22.6px;background:linear-gradient(#e4e4e4,#dbdbdb);border:1px solid #8d8d8d;box-shadow:inset 0 0 0 1px #ececec"></div>
<span class="t" style="left:743.6400000000001px;width:600px;text-align:center;top:656.60px;font-size:11px;font-weight:400;color:#6d6d6d;font-family:'Liberation Sans',sans-serif;transform:scaleX(1.0109);transform-origin:center center;transform-origin:center;-webkit-text-stroke:0.28px #6d6d6d;">&lt;&gt;</span>
<div style="left:1060.5px;top:652.8px;width:41px;height:22.6px;background:linear-gradient(#e4e4e4,#dbdbdb);border:1px solid #8d8d8d;box-shadow:inset 0 0 0 1px #ececec"></div>
<span class="t" style="left:781.0px;width:600px;text-align:center;top:656.60px;font-size:12px;font-weight:400;color:#6d6d6d;font-family:'Liberation Sans',sans-serif;transform:scaleX(0.9832);transform-origin:center center;transform-origin:center;-webkit-text-stroke:0.28px #6d6d6d;">And</span>
<div style="left:1106.5px;top:652.8px;width:41px;height:22.6px;background:linear-gradient(#e4e4e4,#dbdbdb);border:1px solid #8d8d8d;box-shadow:inset 0 0 0 1px #ececec"></div>
<span class="t" style="left:827.0px;width:600px;text-align:center;top:656.60px;font-size:12px;font-weight:400;color:#6d6d6d;font-family:'Liberation Sans',sans-serif;transform:scaleX(0.9742);transform-origin:center center;transform-origin:center;-webkit-text-stroke:0.28px #6d6d6d;">Or</span>
<div style="left:1152.5px;top:652.8px;width:40px;height:22.6px;background:linear-gradient(#e4e4e4,#dbdbdb);border:1px solid #8d8d8d;box-shadow:inset 0 0 0 1px #ececec"></div>
<span class="t" style="left:872.5px;width:600px;text-align:center;top:656.60px;font-size:12px;font-weight:400;color:#6d6d6d;font-family:'Liberation Sans',sans-serif;transform:scaleX(1.0492);transform-origin:center center;transform-origin:center;-webkit-text-stroke:0.28px #6d6d6d;">If</span>
<div style="left:1198px;top:652.8px;width:40.5px;height:22.6px;background:linear-gradient(#e4e4e4,#dbdbdb);border:1px solid #8d8d8d;box-shadow:inset 0 0 0 1px #ececec"></div>
<span class="t" style="left:918.25px;width:600px;text-align:center;top:656.60px;font-size:12px;font-weight:400;color:#6d6d6d;font-family:'Liberation Sans',sans-serif;transform:scaleX(0.8568);transform-origin:center center;transform-origin:center;-webkit-text-stroke:0.28px #6d6d6d;">Else</span>
<div style="left:1243.5px;top:652.8px;width:41px;height:22.6px;background:linear-gradient(#e4e4e4,#dbdbdb);border:1px solid #8d8d8d;box-shadow:inset 0 0 0 1px #ececec"></div>
<span class="t" style="left:964.0px;width:600px;text-align:center;top:656.60px;font-size:12px;font-weight:400;color:#6d6d6d;font-family:'Liberation Sans',sans-serif;transform:scaleX(0.9567);transform-origin:center center;transform-origin:center;-webkit-text-stroke:0.28px #6d6d6d;">End If</span>
<div style="left:597.9px;top:703.8px;width:692.5px;height:33px;background:#d1e6ee"></div>
<svg style="left:604.15px;top:710.15px" width="21.5" height="21.5"><use href="#cb"/></svg>
<svg style="left:604.15px;top:710.15px" width="21.5" height="21.5"><use href="#i-folder"/></svg>
<svg style="left:636.25px;top:710.15px" width="21.5" height="21.5"><use href="#cb"/></svg>
<svg style="left:636.25px;top:710.15px" width="21.5" height="21.5"><use href="#i-doc"/></svg>
<svg style="left:668.35px;top:710.15px" width="21.5" height="21.5"><use href="#cb"/></svg>
<svg style="left:668.35px;top:710.15px" width="21.5" height="21.5"><use href="#i-x"/></svg>
<svg style="left:700.85px;top:710.15px" width="21.5" height="21.5"><use href="#cb"/></svg>
<svg style="left:700.85px;top:710.15px" width="21.5" height="21.5"><use href="#i-check"/></svg>
<span class="t" style="left:601.28px;top:741.80px;font-size:11.6px;font-weight:400;color:#3a32ee;font-family:'Liberation Mono',sans-serif;-webkit-text-stroke:0;">Return</span>
<span class="t" style="left:650.28px;top:741.80px;font-size:11.6px;font-weight:400;color:#4a4a4a;font-family:'Liberation Mono',sans-serif;-webkit-text-stroke:0;">2*[SMYS]*[Nominal Wall Thickness]/[Nominal Diameter]</span>
<span class="t" style="left:600.58px;top:840.60px;font-size:12px;font-weight:400;color:#1e1e1e;font-family:'Liberation Sans',sans-serif;transform:scaleX(0.9345);transform-origin:left center;-webkit-text-stroke:0.28px #1e1e1e;">Return Type:</span>
<span class="t" style="left:600.6px;top:867.40px;font-size:12px;font-weight:400;color:#1e1e1e;font-family:'Liberation Sans',sans-serif;transform:scaleX(0.9110);transform-origin:left center;-webkit-text-stroke:0.28px #1e1e1e;">Precision:</span>
<div style="left:673px;top:835.5px;width:577.5px;height:24.6px;background:#fff;border:1px solid #ebedef;border-top-color:#d3d6da"></div>
<div style="left:673px;top:864.7px;width:577.5px;height:24.6px;background:#fff;border:1px solid #ebedef;border-top-color:#d3d6da"></div>
<span class="t" style="left:678.09px;top:840.40px;font-size:12px;font-weight:400;color:#1e1e1e;font-family:'Liberation Sans',sans-serif;transform:scaleX(0.9229);transform-origin:left center;-webkit-text-stroke:0.28px #1e1e1e;">Decimal</span>
<svg style="left:1235px;top:844.9px" width="7" height="5" viewBox="0 0 7 5"><path d="M0.3 0.3 H6.7 L3.5 4.6 Z" fill="#111"/></svg>
<span class="t" style="right:321.5px;top:867.60px;font-size:12px;font-weight:400;color:#1e1e1e;font-family:'Liberation Sans',sans-serif;transform:scaleX(0.9720);transform-origin:right center;-webkit-text-stroke:0.28px #1e1e1e;">2</span>
</div>
</body></html>
